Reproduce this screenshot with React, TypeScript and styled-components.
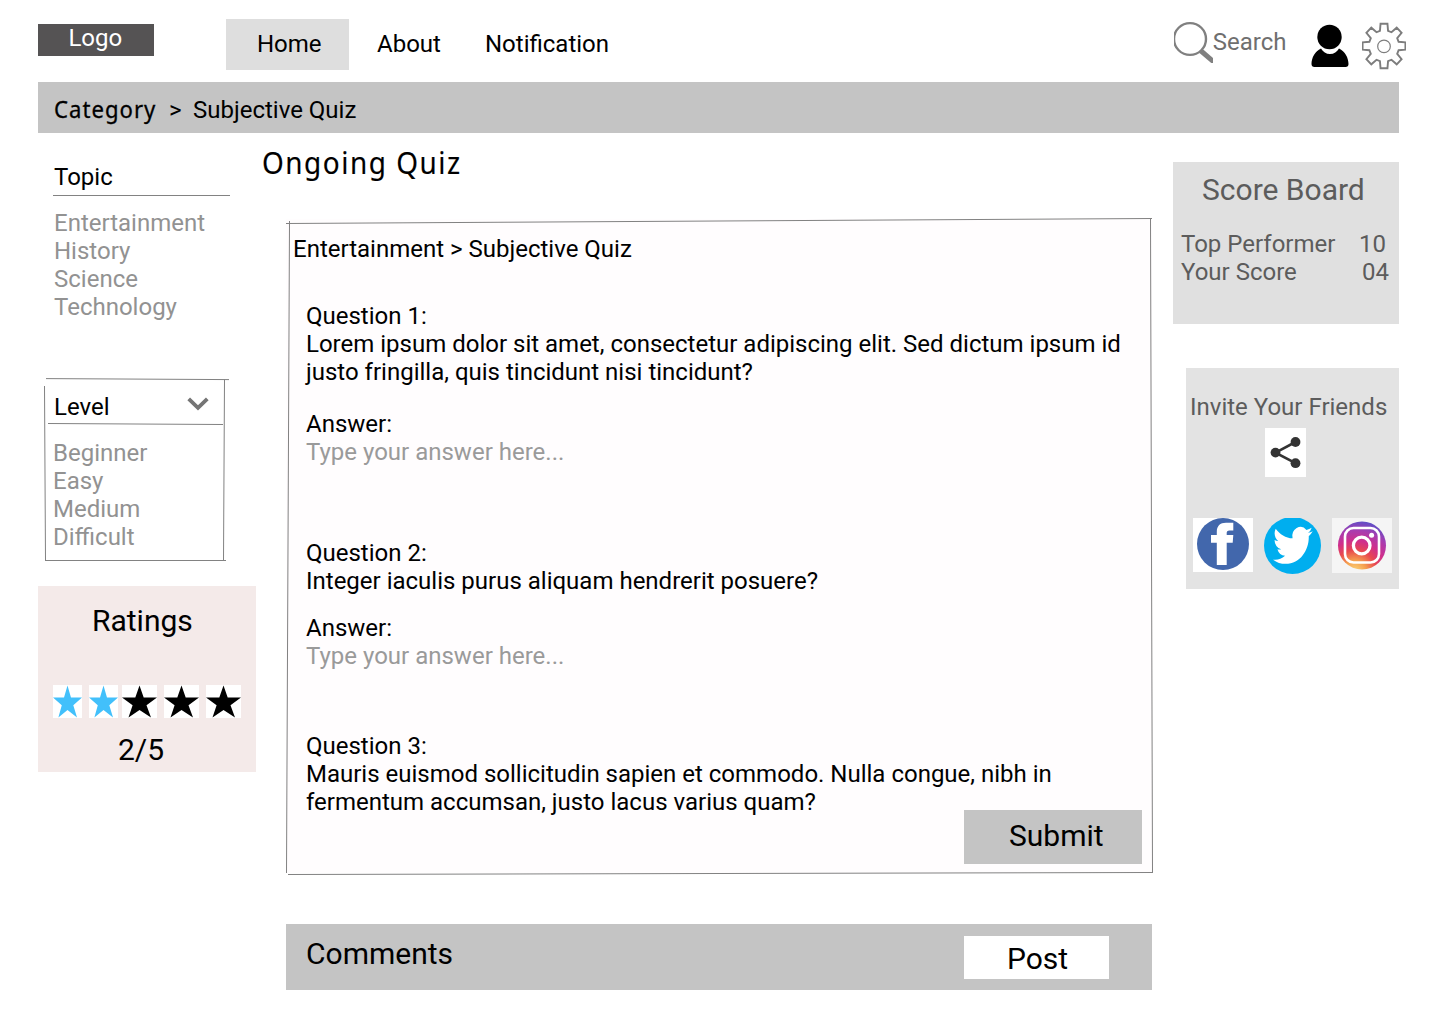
import React from "react";
import styled, { createGlobalStyle } from "styled-components";

const GlobalStyle = createGlobalStyle`
  body { margin: 0; background: #fff; font-family: Roboto, sans-serif; font-size: 24px; line-height: 28px; color: #000; }
  * { box-sizing: border-box; }
  h1, h2, h3, p, ul { margin: 0; padding: 0; font-weight: 400; font-size: inherit; }
  ul { list-style: none; }
  svg { display: block; }
`;

const Page = styled.div`
  width: 1440px;
  height: 1024px;
  overflow: hidden;
`;

const Header = styled.header`
  display: flex;
  align-items: flex-start;
  height: 82px;
  padding: 19px 34px 0 38px;
`;

const Logo = styled.div`
  width: 116px;
  height: 32px;
  margin-top: 5px;
  padding-left: 30.4px;
  background: #555354;
  color: #fff;
`;

const Nav = styled.nav`
  display: flex;
  margin-left: 72px;
`;

const NavItem = styled.a<{ $active?: boolean; $width: number; $indent: number }>`
  width: ${(p) => p.$width}px;
  height: 51px;
  padding: 11px 0 0 ${(p) => p.$indent}px;
  background: ${(p) => (p.$active ? "#dedede" : "transparent")};
`;

const Tools = styled.div`
  display: flex;
  align-items: flex-start;
  margin-left: auto;
  color: #6f6f6f;
`;

const SearchLabel = styled.span`
  margin: 9px 24.500px 0 0;
`;

const Crumbs = styled.div`
  display: flex;
  width: 1361px;
  height: 51px;
  margin-left: 38px;
  padding: 14px 0 0 16px;
  background: #c4c4c4;
`;

const CrumbRoot = styled.span`
  width: 115px;
  margin-top: -1px;
  font-family: "Noto Sans", sans-serif;
  font-size: 23.500px;
  letter-spacing: 1.1px;
  -webkit-text-stroke: 0.3px #000;
  transform: scaleX(0.94);
  transform-origin: left;
`;

const CrumbArrow = styled.span`
  width: 24px;
`;

const Body = styled.main`
  display: grid;
  grid-template-columns: 218px 896px 226px;
  column-gap: 6px;
  padding-left: 38px;
`;

const Sidebar = styled.aside`
  display: flex;
  flex-direction: column;
`;

const Topic = styled.section`
  width: 177px;
  margin: 30px 0 0 15px;
`;

const TopicTitle = styled.h2`
  height: 33px;
  padding-left: 1px;
  border-bottom: 1px solid #828282;
`;

const OptionList = styled.ul`
  color: #929292;
  white-space: nowrap;
`;

const TopicList = styled(OptionList)`
  padding: 13px 0 0 1px;
`;

const Level = styled.section`
  position: relative;
  width: 184px;
  height: 184px;
  margin: 57px 0 0 6px;
  padding-left: 9px;
`;

const LevelHead = styled.div`
  display: flex;
  justify-content: space-between;
  height: 61px;
  padding: 15px 19px 0 1px;
`;

const Sketch = styled.svg`
  position: absolute;
  left: 0;
  top: 0;
  overflow: visible;
  pointer-events: none;
  fill: none;
  stroke: #828282;
`;

const Ratings = styled.section`
  display: flex;
  flex-direction: column;
  width: 218px;
  height: 186px;
  margin-top: 24px;
  padding-top: 17px;
  background: #f4eae9;
  font-size: 30px;
  line-height: 35px;
`;

const RatingsTitle = styled.h2`
  padding-left: 54px;
`;

const Stars = styled.div`
  display: flex;
  margin: 47px 0 0 15px;
`;

const StarTile = styled.div<{ $width: number; $gap: number }>`
  width: ${(p) => p.$width}px;
  height: 33px;
  margin-right: ${(p) => p.$gap}px;
  background: #fff;
`;

const RatingValue = styled.p`
  padding: 14px 0 0 80px;
`;

const Center = styled.div`
  display: flex;
  flex-direction: column;
`;

const Title = styled.h1`
  height: 86px;
  padding-top: 10px;
  font-family: "Noto Sans", sans-serif;
  font-size: 31px;
  line-height: 38px;
  letter-spacing: 1.7px;
  -webkit-text-stroke: 0.15px #000;
  transform: scaleX(0.9);
  transform-origin: left;
`;

const Quiz = styled.section`
  position: relative;
  width: 866px;
  height: 654px;
  margin-left: 24px;
  padding: 16px 10px 0 20px;
  background: #fffdfe;
`;

const QuizPath = styled.h2`
  margin: 0 0 39px -13px;
`;

const Question = styled.article<{ $after: number }>`
  margin-bottom: ${(p) => p.$after}px;
  white-space: pre-line;
`;

const Answer = styled.div<{ $gap: number }>`
  margin-top: ${(p) => p.$gap}px;
`;

const Hint = styled.p`
  color: #9a9a9a;
`;

const Submit = styled.div`
  width: 178px;
  height: 54px;
  margin: -6px 0 0 auto;
  padding: 8px 0 0 45px;
  background: #c4c4c4;
  font-size: 30px;
  line-height: 35px;
`;

const Comments = styled.section`
  display: flex;
  align-items: flex-start;
  justify-content: space-between;
  width: 866px;
  height: 66px;
  margin: 51px 0 0 24px;
  padding: 12px 43px 0 20px;
  background: #c4c4c4;
  font-size: 30px;
  line-height: 35px;
`;

const Post = styled.div`
  width: 145px;
  height: 43px;
  padding: 5px 0 0 43px;
  background: #fff;
`;

const Right = styled.aside`
  display: flex;
  flex-direction: column;
  align-items: flex-end;
  width: 226px;
  margin-left: 9px;
  padding-top: 29px;
  color: #5c5c5c;
`;

const Score = styled.section`
  width: 226px;
  height: 162px;
  padding: 10px 10px 0 8px;
  background: #e0e0e0;
`;

const ScoreTitle = styled.h2`
  margin: 0 0 23px 21px;
  font-size: 30px;
  line-height: 35px;
`;

const ScoreRow = styled.div<{ $inset: number }>`
  display: flex;
  justify-content: space-between;
  padding-right: ${(p) => p.$inset}px;
`;

const Invite = styled.section`
  width: 213px;
  height: 221px;
  margin-top: 44px;
  padding-top: 25px;
  background: #e3e3e3;
`;

const InviteTitle = styled.h2`
  padding-left: 4px;
  white-space: nowrap;
`;

const ShareTile = styled.div`
  width: 41px;
  height: 49px;
  margin: 7px 0 41px 79px;
  background: #fff;
`;

const Socials = styled.div`
  display: flex;
  padding-left: 7px;
`;

const SocialTile = styled.div<{ $bg: string; $width: number; $height: number; $gap: number }>`
  width: ${(p) => p.$width}px;
  height: ${(p) => p.$height}px;
  margin-right: ${(p) => p.$gap}px;
  background: ${(p) => p.$bg};
`;

const topics = ["Entertainment", "History", "Science", "Technology"];
const levels = ["Beginner", "Easy", "Medium", "Difficult"];

const stars = [
  { width: 29, gap: 7, color: "#42c0fb" },
  { width: 29, gap: 4, color: "#42c0fb" },
  { width: 35, gap: 7, color: "#000" },
  { width: 35, gap: 7, color: "#000" },
  { width: 35, gap: 0, color: "#000" },
];

const questions = [
  {
    text: "Lorem ipsum dolor sit amet, consectetur adipiscing elit. Sed dictum ipsum id\njusto fringilla, quis tincidunt nisi tincidunt?",
    gap: 24,
    after: 73,
  },
  { text: "Integer iaculis purus aliquam hendrerit posuere?", gap: 19, after: 62 },
  {
    text: "Mauris euismod sollicitudin sapien et commodo. Nulla congue, nibh in\nfermentum accumsan, justo lacus varius quam?",
    gap: null,
    after: 0,
  },
];

const SearchIcon = () => (
  <svg width="39" height="44" viewBox="0 0 39 44" fill="none" stroke="#808080">
    <ellipse cx="16" cy="20" rx="16" ry="15.900" strokeWidth="2.400" />
    <path d="M26.500 31.500l14 12" strokeWidth="5" />
  </svg>
);

const UserIcon = () => (
  <svg width="51" height="50" viewBox="0 0 51 50">
    <path d="M10 29.500C4 32 .5 39 .5 45q0 3 3 3h31q3 0 3-3c0-6-3.500-13-9.500-15.500-2 3.500-5 5.500-9 5.500s-7-2-9-5.500z" />
    <ellipse cx="18.500" cy="18" rx="12.200" ry="12.200" />
  </svg>
);

const gearPath = (() => {
  const parts: string[] = [];
  for (let i = 0; i < 8; i++) {
    const a = (i * Math.PI) / 4 - Math.PI / 2;
    const steps: [number, number][] = [[-0.27, 15.8], [-0.16, 22.6], [0.16, 22.6], [0.27, 15.8]];
    for (const [d, r] of steps) {
      parts.push(`${(22 + r * 0.96 * Math.cos(a + d)).toFixed(2)} ${(27 + r * Math.sin(a + d)).toFixed(2)}`);
    }
  }
  return `M${parts.join("L")}Z`;
})();

const GearIcon = () => (
  <svg width="44" height="52" viewBox="0 0 44 52" fill="none" stroke="#7d7d7d">
    <path d={gearPath} strokeWidth="1.900" />
    <circle cx="22" cy="27.400" r="6.300" strokeWidth="1.200" />
  </svg>
);

const Star = ({ width, color }: { width: number; color: string }) => (
  <svg width={width} height="33" viewBox="0 0 35 33" preserveAspectRatio="none" fill={color}>
    <path d="M17.500.5l4.200 12H35L24.500 20.200 29 32.500 17.500 25 6.500 32.500 10.600 20.200 0 12.500h13.300z" />
  </svg>
);

const ShareIcon = () => (
  <svg width="41" height="49" viewBox="0 0 41 49" fill="#333" stroke="#333">
    <path d="M30.500 14L10.500 24.700l20 10.500" fill="none" strokeWidth="2.600" />
    <circle cx="30.500" cy="14" r="4.900" stroke="none" />
    <circle cx="10.500" cy="24.600" r="4.900" stroke="none" />
    <circle cx="30.500" cy="35.200" r="4.900" stroke="none" />
  </svg>
);

const FacebookIcon = () => (
  <svg width="60" height="54" viewBox="0 0 60 54">
    <circle cx="30" cy="26" r="26" fill="#4267ac" />
    <path fill="#fff" d="M23.800 47V24.700H18V17h5.800v-3C23.800 8 27 4.800 33 4.800h7.300v7.700h-3.800c-2.200 0-2.800 1-2.800 2.800V17h6.600l-.6 7.700h-6V47z" />
  </svg>
);

const TwitterIcon = () => (
  <svg width="57" height="57" viewBox="0 0 57 57">
    <circle cx="28.500" cy="27.500" r="28.500" fill="#00aeef" />
    <path
      fill="#fff"
      transform="translate(9 4.700) scale(1.660 1.890)"
      d="M23.950 4.570a10 10 0 0 1-2.820.77 4.960 4.960 0 0 0 2.160-2.720c-.95.560-2 .960-3.130 1.180a4.920 4.920 0 0 0-8.380 4.480C7.690 8.090 4.070 6.130 1.640 3.160a4.820 4.820 0 0 0-.670 2.480c0 1.710.870 3.210 2.190 4.100a4.900 4.900 0 0 1-2.230-.620v.060a4.920 4.920 0 0 0 3.950 4.830 5 5 0 0 1-2.210.080 4.940 4.940 0 0 0 4.600 3.420A9.870 9.870 0 0 1 0 19.540a14 14 0 0 0 7.550 2.210c9.050 0 14-7.500 14-13.980 0-.210 0-.420-.020-.630a9.940 9.940 0 0 0 2.420-2.570z"
    />
  </svg>
);

const InstagramIcon = () => (
  <svg width="60" height="55" viewBox="0 0 60 55" fill="none">
    <defs>
      <radialGradient id="insta" cx="0.35" cy="1.050" r="1.080">
        <stop offset="0" stopColor="#fbd87c" />
        <stop offset="0.22" stopColor="#f5a04f" />
        <stop offset="0.42" stopColor="#e8484f" />
        <stop offset="0.60" stopColor="#d02f8c" />
        <stop offset="0.80" stopColor="#a83cb0" />
        <stop offset="1" stopColor="#5a50c8" />
      </radialGradient>
    </defs>
    <circle cx="30" cy="27.500" r="24" fill="url(#insta)" />
    <rect x="13" y="10" width="34" height="34.500" rx="8.500" stroke="#fff" strokeWidth="2.600" />
    <circle cx="29.700" cy="27.500" r="8.300" stroke="#fff" strokeWidth="3.300" />
    <circle cx="39.600" cy="17.200" r="2.500" fill="#fff" />
  </svg>
);

export default function App() {
  return (
    <Page>
      <GlobalStyle />
      <Header>
        <Logo>Logo</Logo>
        <Nav>
          <NavItem $active $width={123} $indent={31}>Home</NavItem>
          <NavItem $width={108} $indent={28}>About</NavItem>
          <NavItem $width={160} $indent={28}>Notification</NavItem>
        </Nav>
        <Tools>
          <SearchIcon />
          <SearchLabel>Search</SearchLabel>
          <UserIcon />
          <GearIcon />
        </Tools>
      </Header>
      <Crumbs>
        <CrumbRoot>Category</CrumbRoot>
        <CrumbArrow>&gt;</CrumbArrow>
        <span>Subjective Quiz</span>
      </Crumbs>
      <Body>
        <Sidebar>
          <Topic>
            <TopicTitle>Topic</TopicTitle>
            <TopicList>
              {topics.map((t) => <li key={t}>{t}</li>)}
            </TopicList>
          </Topic>
          <Level>
            <Sketch width="184" height="184">
              <path d="M2 .6L185 1.600M.5 8L1.500 182.500M180.500 1.500L179.500 182.500M1 182.500H182M4 45.500L179 46.500" />
            </Sketch>
            <LevelHead>
              <span>Level</span>
              <svg width="22" height="28" viewBox="0 0 22 28" fill="none" stroke="#757575" strokeWidth="3.800">
                <path d="M1.700 5.800l9.300 9 9.300-9" />
              </svg>
            </LevelHead>
            <OptionList>
              {levels.map((l) => <li key={l}>{l}</li>)}
            </OptionList>
          </Level>
          <Ratings>
            <RatingsTitle>Ratings</RatingsTitle>
            <Stars>
              {stars.map((s, i) => (
                <StarTile key={i} $width={s.width} $gap={s.gap}>
                  <Star width={s.width} color={s.color} />
                </StarTile>
              ))}
            </Stars>
            <RatingValue>2/5</RatingValue>
          </Ratings>
        </Sidebar>
        <Center>
          <Title>Ongoing Quiz</Title>
          <Quiz>
            <Sketch width="866" height="654">
              <path d="M0 4.500L866-.5M3.500 2L.5 654M2 655.500L867 653.500M864.500 0L866.500 654" />
            </Sketch>
            <QuizPath>Entertainment &gt; Subjective Quiz</QuizPath>
            {questions.map((q, i) => (
              <Question key={i} $after={q.after}>
                <h3>Question {i + 1}:</h3>
                <p>{q.text}</p>
                {q.gap !== null && (
                  <Answer $gap={q.gap}>
                    <p>Answer:</p>
                    <Hint>Type your answer here...</Hint>
                  </Answer>
                )}
              </Question>
            ))}
            <Submit>Submit</Submit>
          </Quiz>
          <Comments>
            <h2>Comments</h2>
            <Post>Post</Post>
          </Comments>
        </Center>
        <Right>
          <Score>
            <ScoreTitle>Score Board</ScoreTitle>
            <ScoreRow $inset={3}><span>Top Performer</span><span>10</span></ScoreRow>
            <ScoreRow $inset={0}><span>Your Score</span><span>04</span></ScoreRow>
          </Score>
          <Invite>
            <InviteTitle>Invite Your Friends</InviteTitle>
            <ShareTile><ShareIcon /></ShareTile>
            <Socials>
              <SocialTile $bg="#fff" $width={60} $height={54} $gap={11}><FacebookIcon /></SocialTile>
              <SocialTile $bg="transparent" $width={57} $height={57} $gap={11}><TwitterIcon /></SocialTile>
              <SocialTile $bg="#f5f5f5" $width={60} $height={55} $gap={0}><InstagramIcon /></SocialTile>
            </Socials>
          </Invite>
        </Right>
      </Body>
    </Page>
  );
}
